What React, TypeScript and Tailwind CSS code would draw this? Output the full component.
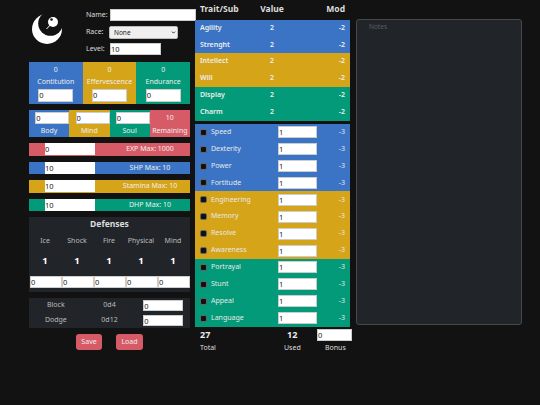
import { ChevronDown } from 'lucide-react'

const blue = 'bg-[#3b74c4]'
const gold = 'bg-[#d6a419]'
const green = 'bg-[#029a78]'
const red = 'bg-[#d75a67]'

const fieldClass =
  'bg-white text-[#222] border border-[#ccc] outline-none px-0 text-[7.5px] leading-none'

const traits = [
  { name: 'Agility', color: blue },
  { name: 'Strenght', color: blue },
  { name: 'Intellect', color: gold },
  { name: 'Will', color: gold },
  { name: 'Display', color: green },
  { name: 'Charm', color: green },
]

const subs = [
  { name: 'Speed', color: blue },
  { name: 'Dexterity', color: blue },
  { name: 'Power', color: blue },
  { name: 'Fortitude', color: blue },
  { name: 'Engineering', color: gold },
  { name: 'Memory', color: gold },
  { name: 'Resolve', color: gold },
  { name: 'Awareness', color: gold },
  { name: 'Portrayal', color: green },
  { name: 'Stunt', color: green },
  { name: 'Appeal', color: green },
  { name: 'Language', color: green },
]

const bars = [
  { value: '0', label: 'EXP Max: 1000', color: red },
  { value: '10', label: 'SHP Max: 10', color: blue },
  { value: '10', label: 'Stamina Max: 10', color: gold },
  { value: '10', label: 'DHP Max: 10', color: green },
]

function Logo() {
  return (
    <svg width="30" height="30" viewBox="0 0 30 30" className="block">
      <circle cx="15" cy="15" r="15" fill="#fff" />
      <circle cx="18.5" cy="9.5" r="12.3" fill="#121212" />
      <path d="M14.5 15 L21 8" stroke="#fff" strokeWidth="1" />
      <circle cx="21" cy="8" r="5" fill="#fff" />
      <circle cx="19.5" cy="5.5" r="1.3" fill="#121212" />
    </svg>
  )
}

function Header() {
  return (
    <div className="flex h-[43px] items-start">
      <div className="w-[57px] shrink-0 pt-[4px] pl-[3px]">
        <Logo />
      </div>
      <div className="flex flex-col text-[7px] text-[#ddd]">
        <div className="flex h-[12px] items-center mt-[-1px]">
          <span className="w-[24px] shrink-0">Name:</span>
          <input readOnly className={`${fieldClass} w-[86px] h-[12px] shrink-0`} />
        </div>
        <div className="flex h-[13px] items-center mt-[5px]">
          <span className="w-[23px] shrink-0">Race:</span>
          <div className="relative w-[69px] h-[13px]">
            <select className="appearance-none block w-full h-full bg-[#efefef] text-[#222] text-[6.5px] pl-[4px] rounded-[2px] border border-[#bbb]">
              <option>None</option>
            </select>
            <ChevronDown size={5} strokeWidth={4} className="absolute right-[2px] top-[4px] text-[#111]" />
          </div>
        </div>
        <div className="flex h-[12px] items-center mt-[4px]">
          <span className="w-[24px] shrink-0">Level:</span>
          <input readOnly value="10" className={`${fieldClass} w-[51px] h-[12px]`} />
        </div>
      </div>
    </div>
  )
}

function Abilities() {
  const cols = [
    { name: 'Contitution', color: blue },
    { name: 'Effervescence', color: gold },
    { name: 'Endurance', color: green },
  ]
  return (
    <div className="grid grid-cols-3 h-[42px] mt-[9px]">
      {cols.map((c) => (
        <div key={c.name} className={`${c.color} flex flex-col items-center text-[7px] text-[#eee]`}>
          <div className="h-[11px] mt-[2px] leading-[11px]">0</div>
          <div className="leading-[11px] mt-[1px] whitespace-nowrap">{c.name}</div>
          <input readOnly value="0" className={`${fieldClass} w-[35px] h-[13px] mt-[1.5px]`} />
        </div>
      ))}
    </div>
  )
}

function Points() {
  const cols = [
    { name: 'Body', color: blue },
    { name: 'Mind', color: gold },
    { name: 'Soul', color: green },
  ]
  return (
    <div className="grid grid-cols-4 h-[27px] mt-[6px]">
      {cols.map((c) => (
        <div key={c.name} className={`${c.color} flex flex-col items-end text-[7px] text-[#eee]`}>
          <input readOnly value="0" className={`${fieldClass} w-[34px] h-[12px] mt-[2px]`} />
          <div className="w-full text-center leading-[11px] mt-[1px]">{c.name}</div>
        </div>
      ))}
      <div className={`${red} flex flex-col items-center text-[7px] text-[#eee]`}>
        <div className="leading-[11px] mt-[1.5px]">10</div>
        <div className="leading-[11px] mt-[2px]">Remaining</div>
      </div>
    </div>
  )
}

function Bars() {
  return (
    <div className="flex flex-col gap-[6px] mt-[6px]">
      {bars.map((b) => (
        <div key={b.label} className={`${b.color} flex items-center h-[12.5px] pl-[16px] text-[7px] text-[#eee]`}>
          <input readOnly value={b.value} className={`${fieldClass} w-[50px] h-[12px] border-0`} />
          <div className="flex-1 text-center pl-[15px]">{b.label}</div>
        </div>
      ))}
    </div>
  )
}

function Defenses() {
  const names = ['Ice', 'Shock', 'Fire', 'Physical', 'Mind']
  return (
    <div className="bg-[#212529] h-[75px] mt-[6px] text-[7px] text-[#bbb]">
      <div className="text-center text-[8.5px] font-bold text-[#ddd] leading-[12px] pt-[1px]">Defenses</div>
      <div className="grid grid-cols-[repeat(5,32px)] mt-[5px]">
        {names.map((n) => (
          <div key={n} className="text-center leading-[11px]">{n}</div>
        ))}
      </div>
      <div className="grid grid-cols-[repeat(5,32px)] mt-[9px]">
        {names.map((n) => (
          <div key={n} className="text-center text-[9.5px] font-bold text-white leading-[11px]">1</div>
        ))}
      </div>
      <div className="grid grid-cols-[repeat(5,32px)] mt-[10px] pl-[1px] w-[170px]">
        {names.map((n) => (
          <input readOnly key={n} value="0" className={`${fieldClass} w-[32px] h-[12px]`} />
        ))}
      </div>
    </div>
  )
}

function Rolls() {
  const rows = [
    { name: 'Block', dice: '0d4' },
    { name: 'Dodge', dice: '0d12' },
  ]
  return (
    <div className="bg-[#212529] h-[30px] mt-[6px] pt-[2px] flex flex-col gap-[4px] text-[7px] text-[#bbb]">
      {rows.map((r) => (
        <div key={r.name} className="grid grid-cols-3 items-center h-[11px]">
          <div className="text-center">{r.name}</div>
          <div className="text-center">{r.dice}</div>
          <input readOnly value="0" className={`${fieldClass} w-[40px] h-[11px] ml-[7px]`} />
        </div>
      ))}
    </div>
  )
}

function TraitTable() {
  return (
    <div className="w-[155px] ml-[5px] shrink-0">
      <div className="flex h-[19.5px] items-center pl-[5px] pr-[5px] text-[8.5px] font-bold text-[#ddd]">
        <div className="w-[57px]">Trait/Sub</div>
        <div className="w-[30px] text-center">Value</div>
        <div className="flex-1 text-right">Mod</div>
      </div>
      <div>
        {traits.map((t) => (
          <div key={t.name} className={`${t.color} flex h-[16.9px] items-center pl-[5px] pr-[5px] text-[7px] font-semibold text-[#eee]`}>
            <div className="w-[57px]">{t.name}</div>
            <div className="w-[30px] text-center">2</div>
            <div className="flex-1 text-right">-2</div>
          </div>
        ))}
      </div>
      <div className="mt-[3px]">
        {subs.map((s) => (
          <div key={s.name} className={`${s.color} flex h-[16.9px] items-center pl-[5px] pr-[5px] text-[7px] text-[#e8e8e8]`}>
            <span className="w-[7px] h-[7px] rounded-[2px] bg-[#111] border border-[#666] shrink-0 mr-[4px]" />
            <div className="w-[67px]">{s.name}</div>
            <input readOnly value="1" className={`${fieldClass} w-[39px] h-[12px]`} />
            <div className="flex-1 text-right">-3</div>
          </div>
        ))}
      </div>
      <div className="grid grid-cols-[87px_35px_33px] text-[#ddd] text-[7px] pt-[2px] pl-[5px]">
        <div className="text-[9px] font-bold text-[#eee] leading-[11px]">27</div>
        <div className="text-[9px] font-bold text-[#eee] leading-[11px]">12</div>
        <input readOnly value="0" className={`${fieldClass} w-[35px] h-[12px] ml-[-5px]`} />
        <div className="leading-[11px] mt-[1px]">Total</div>
        <div className="leading-[11px] mt-[1px] ml-[-3px]">Used</div>
        <div className="leading-[11px] mt-[1px] ml-[3px]">Bonus</div>
      </div>
    </div>
  )
}

export default function App() {
  return (
    <div
      className="w-[540px] h-[405px] overflow-hidden bg-[#121212] flex pl-[29px]"
      style={{ fontFamily: '"Noto Sans", sans-serif' }}
    >
      <div className="w-[161px] shrink-0 pt-[10px]">
        <Header />
        <Abilities />
        <Points />
        <Bars />
        <Defenses />
        <Rolls />
        <div className="flex justify-center gap-[14px] mt-[6px]">
          <button className={`${red} w-[26px] h-[16px] rounded-[3px] text-[7px] text-[#eee]`}>Save</button>
          <button className={`${red} w-[27px] h-[16px] rounded-[3px] text-[7px] text-[#eee]`}>Load</button>
        </div>
      </div>
      <TraitTable />
      <div className="pt-[19px] ml-[6px]">
        <textarea
          readOnly
          placeholder="Notes"
          className="block w-[166px] h-[306px] bg-[#212529] border border-[#45484c] rounded-[3px] pl-[12px] pt-[2px] text-[6.5px] outline-none resize-none placeholder:text-[#5a5e62]"
        />
      </div>
    </div>
  )
}
